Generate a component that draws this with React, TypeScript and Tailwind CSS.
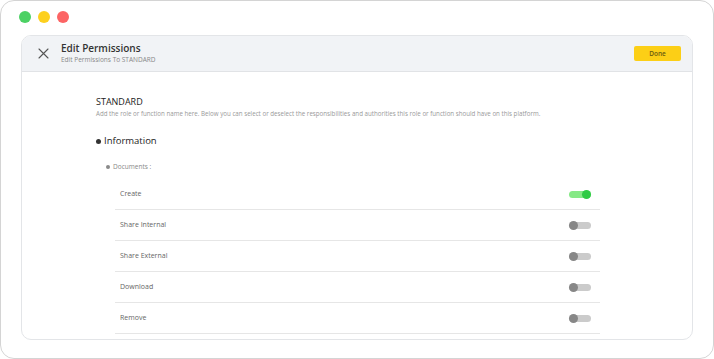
import React from 'react';

const permissions = [
  { label: 'Create', enabled: true },
  { label: 'Share Internal', enabled: false },
  { label: 'Share External', enabled: false },
  { label: 'Download', enabled: false },
  { label: 'Remove', enabled: false },
];

const Toggle = ({ on }: { on: boolean }) => (
  <div className="relative w-[22px] h-[9px] flex items-center">
    <div className={on ? 'w-full h-[7px] rounded-full bg-[#86e986]' : 'w-full h-[7px] rounded-full bg-[#cbcbcb]'} />
    <div
      className={
        on
          ? 'absolute right-0 top-0 w-[9px] h-[9px] rounded-full bg-[#2fcb45]'
          : 'absolute left-0 top-0 w-[9px] h-[9px] rounded-full bg-[#878787]'
      }
    />
  </div>
);

const App: React.FC = () => {
  return (
    <div className="w-[714px] h-[359px] bg-white font-['Open_Sans',sans-serif]">
      <div className="w-full h-full border border-[#d4d4d4] rounded-[14px] flex flex-col">
        {/* window dots */}
        <div className="flex gap-[7px] pl-[18px] pt-[10px]">
          <span className="w-[12px] h-[12px] rounded-full bg-[#4cd164]" />
          <span className="w-[12px] h-[12px] rounded-full bg-[#fdd01f]" />
          <span className="w-[12px] h-[12px] rounded-full bg-[#fc6464]" />
        </div>

        <div className="mx-[20px] mt-[12px] h-[305px] border border-[#e3e5e8] rounded-[10px] overflow-hidden flex flex-col">
          {/* header */}
          <div className="h-[36px] shrink-0 bg-[#f1f3f6] border-b border-[#e1e3e6] flex items-center pl-[16px] pr-[11px]">
            <svg width="11" height="11" viewBox="0 0 11 11" className="text-[#555]">
              <path d="M1 1L10 10M10 1L1 10" stroke="currentColor" strokeWidth="1.1" strokeLinecap="round" />
            </svg>
            <div className="ml-[12px] flex flex-col">
              <span className="text-[10px] leading-[13px] font-semibold text-[#333]">Edit Permissions</span>
              <span className="text-[6.5px] leading-[10px] text-[#888]">Edit Permissions To STANDARD</span>
            </div>
            <button className="ml-auto w-[47px] h-[15px] rounded-[2px] bg-[#fccf16] text-[6.5px] font-semibold text-[#6b5c10] flex items-center justify-center">
              Done
            </button>
          </div>

          {/* body */}
          <div className="pl-[74px] pr-[92px] pt-[24px]">
            <div className="text-[9px] leading-[12px] text-[#222]">STANDARD</div>
            <div className="mt-[1px] text-[6.2px] leading-[10px] text-[#999]">
              Add the role or function name here. Below you can select or deselect the responsibilities and authorities this role or function should have on this platform.
            </div>

            <div className="mt-[15px] flex items-center h-[14px]">
              <span className="w-[5px] h-[5px] rounded-full bg-[#333]" />
              <span className="ml-[3px] text-[9.5px] leading-[14px] text-[#222]">Information</span>
            </div>

            <div className="mt-[14px] pl-[10px] flex items-center h-[10px]">
              <span className="w-[4px] h-[4px] rounded-full bg-[#8a8a8a]" />
              <span className="ml-[3px] text-[6.5px] leading-[10px] text-[#888]">Documents :</span>
            </div>

            <div className="mt-[7px] ml-[19px]">
              {permissions.map((p) => (
                <div
                  key={p.label}
                  className="h-[31px] border-b border-[#e6e6e6] flex items-center justify-between pl-[5px] pr-[9px]"
                >
                  <span className="text-[7px] text-[#666]">{p.label}</span>
                  <Toggle on={p.enabled} />
                </div>
              ))}
            </div>
          </div>
        </div>
      </div>
    </div>
  );
};

export default App;
